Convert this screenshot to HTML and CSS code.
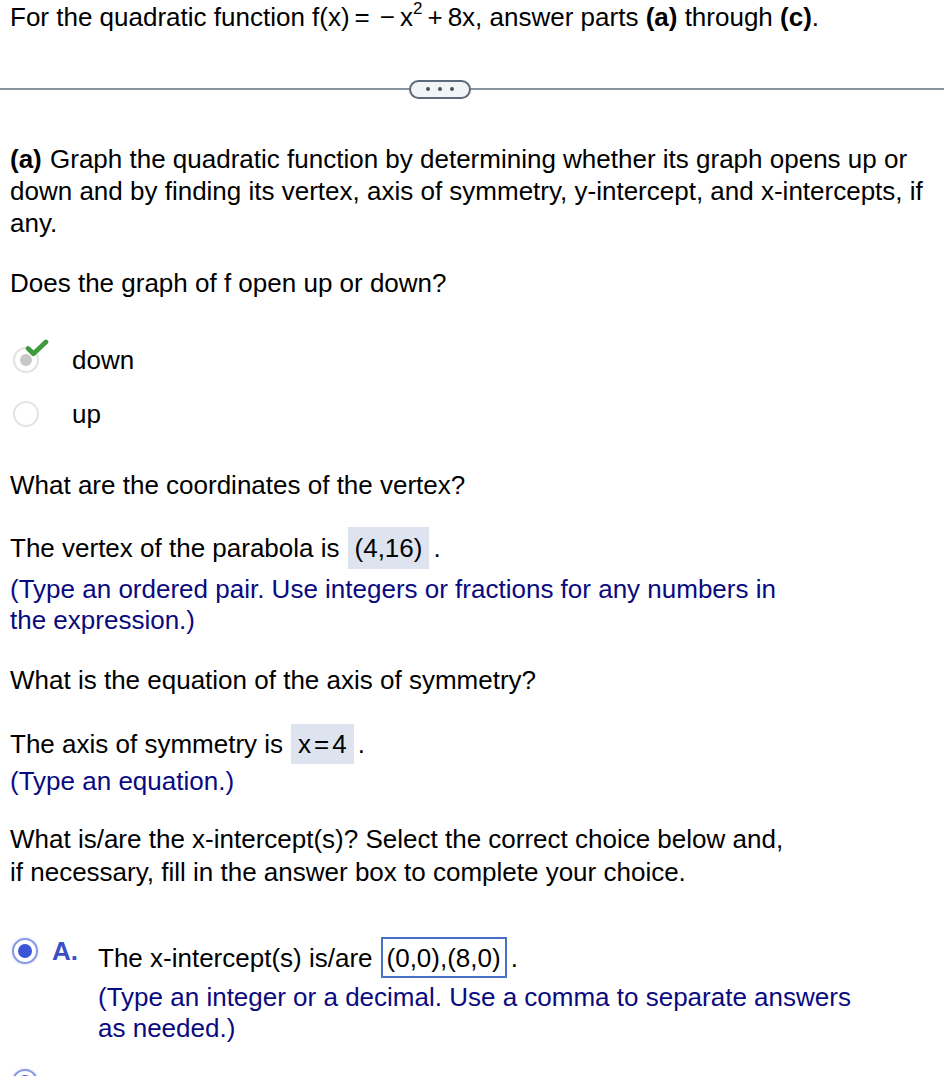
FILE: index.html
```html
<!DOCTYPE html>
<html lang="en">

<head>
    <meta charset="UTF-8">
    <title>Quadratic function</title>
    <link rel="stylesheet" href="styles.css">
</head>

<body>
    <div class="question">
        <p class="intro">For the quadratic function <span class="math">f(x)<span class="op">=</span><span class="op">&minus;</span>x<sup>2</sup><span class="op">+</span>8x</span>, answer parts <b>(a)</b> through <b>(c)</b>.</p>

        <div class="divider">
            <span class="more"><i></i><i></i><i></i></span>
        </div>

        <p class="part"><b class="label">(a)</b> Graph the quadratic function by determining whether its graph opens up or down and by finding its vertex, axis of symmetry, y-intercept, and x-intercepts, if any.</p>

        <p class="ask">Does the graph of f open up or down?</p>

        <ul class="choices">
            <li class="choice">
                <span class="radio checked">
                    <svg class="tick" viewBox="0 0 20 16" width="24" height="19">
                        <path d="M2.5 8 L7 12.5 L17.5 2.5" fill="none" stroke="#3d9a3d" stroke-width="4" stroke-linecap="round" stroke-linejoin="round" />
                    </svg>
                </span>
                down
            </li>
            <li class="choice">
                <span class="radio"></span>
                up
            </li>
        </ul>

        <p class="ask">What are the coordinates of the vertex?</p>

        <div class="answer-row vertex">The vertex of the parabola is <span class="filled">(4,16)</span>.</div>
        <p class="hint">(Type an ordered pair. Use integers or fractions for any numbers in the expression.)</p>

        <p class="ask">What is the equation of the axis of symmetry?</p>

        <div class="answer-row axis">The axis of symmetry is <span class="filled">x<span class="op">=</span>4</span>.</div>
        <p class="hint tight">(Type an equation.)</p>

        <p class="ask wide">What is/are the x-intercept(s)? Select the correct choice below and, if necessary, fill in the answer box to complete your choice.</p>

        <div class="option">
            <span class="radio selected"></span>
            <span class="letter">A.</span>
            <div class="option-body">
                <div class="answer-row">The x-intercept(s) is/are <span class="boxed">(0,0),(8,0)</span>.</div>
                <p class="hint">(Type an integer or a decimal. Use a comma to separate answers as needed.)</p>
            </div>
        </div>

        <div class="option next">
            <span class="radio selected"></span>
        </div>
    </div>
</body>

</html>
```

FILE: styles.css
```css
/* reset */
* {
    margin: 0;
    padding: 0;
    box-sizing: border-box;
}

body {
    background: #fff;
    color: #000;
    font-family: "Liberation Sans", Arial, sans-serif;
    font-size: 26px;
    line-height: 32px;
    overflow: hidden;
}

.question {
    padding: 0 10px;
}

.intro {
    margin-top: 1px;
}

.math .op {
    margin: 0 5px;
}

.math sup {
    font-size: 17px;
    line-height: 0;
    vertical-align: 12px;
}

/* divider with the dots pill */
.divider {
    margin: 46px -10px 0;
    height: 20px;
    display: flex;
    align-items: center;
    justify-content: center;
    position: relative;
}

.divider::before {
    content: "";
    position: absolute;
    left: 0;
    right: 0;
    top: 9px;
    height: 2px;
    background: #8a93a0;
}

.more {
    position: relative;
    margin-left: -64px;
    width: 62px;
    height: 19px;
    border: 2px solid #5d6b7a;
    border-radius: 10px;
    background: #f3f4f6;
    display: flex;
    align-items: center;
    justify-content: center;
    gap: 8px;
}

.more i {
    width: 4px;
    height: 4px;
    border-radius: 50%;
    background: #4a5260;
}

.part {
    margin-top: 44px;
}

.label {
    margin-right: 1px;
}

.ask {
    margin-top: 28px;
}

.ask.wide {
    margin-top: 26px;
    line-height: 33px;
    max-width: 785px;
}

/* radio list */
.choices {
    list-style: none;
    margin-top: 34px;
}

.choice {
    display: flex;
    align-items: center;
    height: 54px;
    padding-left: 62px;
    position: relative;
}

.radio {
    position: absolute;
    left: 3px;
    top: 14px;
    width: 26px;
    height: 26px;
    border-radius: 50%;
    border: 2px solid #e4e4e4;
    background: #fff;
}

.radio.checked {
    border-color: #e2e2e2;
}

.radio.checked::after {
    content: "";
    position: absolute;
    left: 5px;
    top: 5px;
    width: 12px;
    height: 12px;
    border-radius: 50%;
    background: #c8c8c8;
}

.tick {
    position: absolute;
    left: 10px;
    top: -10px;
    z-index: 1;
}

/* answers */
.answer-row {
    margin-top: 27px;
    height: 42px;
    display: flex;
    align-items: center;
}

.answer-row.vertex {
    margin-top: 26px;
}

.answer-row.axis {
    margin-top: 28px;
    height: 40px;
}

.filled {
    background: #dde4ef;
    padding: 0 7px;
    margin-left: 8px;
    margin-right: 4px;
    height: 100%;
    display: inline-flex;
    align-items: center;
}

.filled .op {
    margin: 0 3px;
}

.hint {
    color: #0a0a80;
    margin-top: 5px;
    line-height: 31px;
    max-width: 790px;
}

.hint.tight {
    margin-top: 2px;
}

/* multiple choice option */
.option {
    display: flex;
    position: relative;
    padding-left: 42px;
    margin-top: 48px;
}

.option .radio.selected {
    left: 2px;
    top: 1px;
    border: 2px solid #8799e6;
    box-shadow: 0 0 2px 1px #e6eafa;
}

.option .radio.selected::after {
    content: "";
    position: absolute;
    left: 4px;
    top: 4px;
    width: 14px;
    height: 14px;
    border-radius: 50%;
    background: #3a55d6;
}

.letter {
    color: #3a4fc6;
    font-weight: bold;
    width: 46px;
    margin-top: -2px;
}

.option-body .answer-row {
    margin-top: 0;
    height: 41px;
}

.option-body .hint {
    margin-top: 4px;
    max-width: 770px;
}

.boxed {
    border: 2px solid #4a6fc6;
    height: 100%;
    display: inline-flex;
    align-items: center;
    padding: 0 4px;
    margin-left: 8px;
    margin-right: 4px;
}

.option.next {
    margin-top: 24px;
    height: 40px;
}
```
